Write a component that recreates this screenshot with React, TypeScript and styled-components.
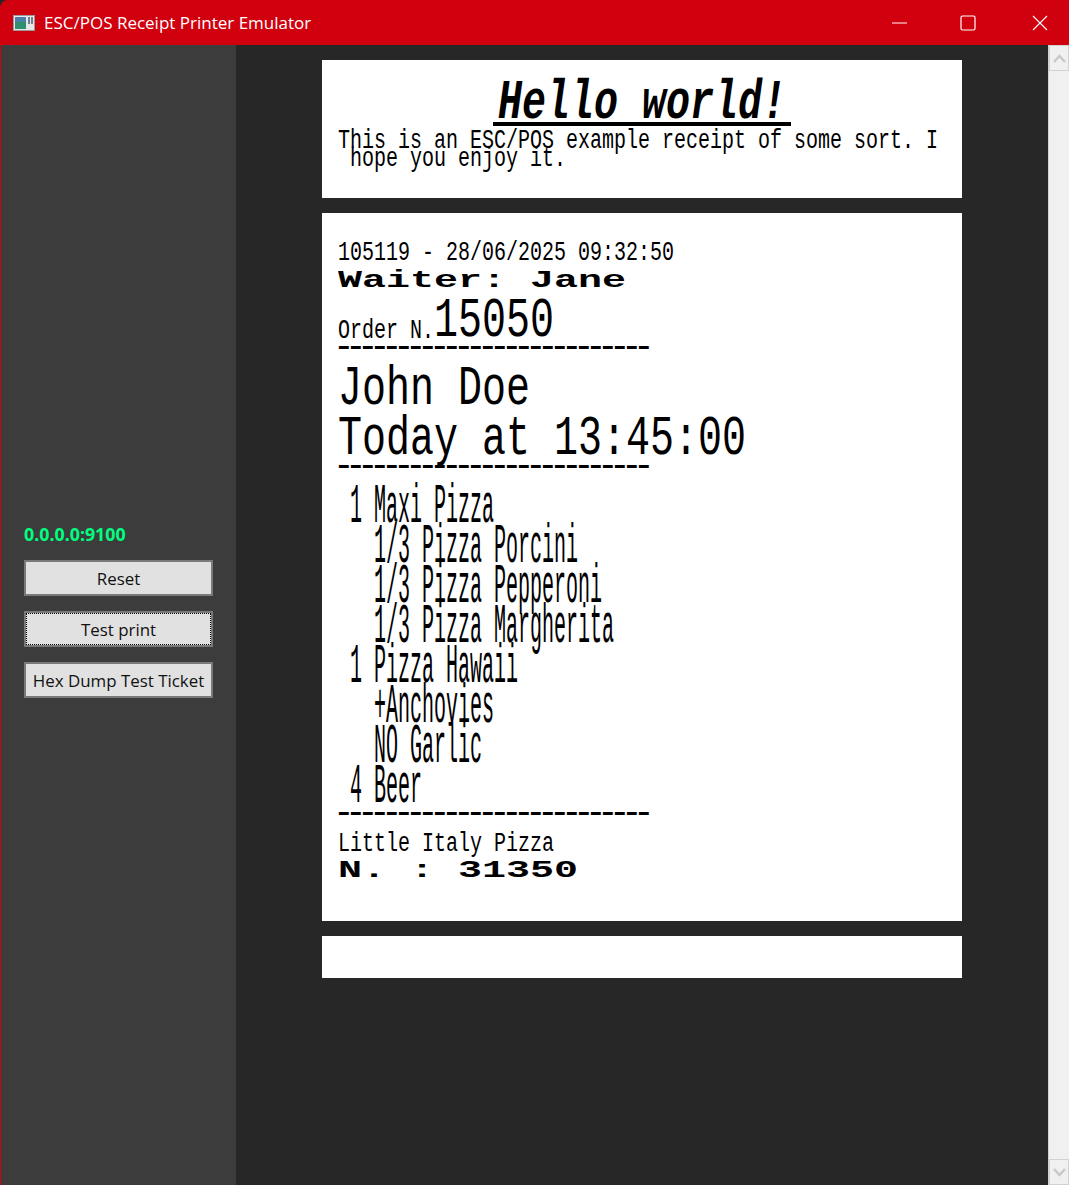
import React from 'react';
import styled, { createGlobalStyle } from 'styled-components';

const GlobalStyle = createGlobalStyle`
  html, body {
    margin: 0;
    padding: 0;
    height: 100%;
    background: #272727;
    overflow: hidden;
  }
  #root {
    height: 100%;
  }
`;

const Window = styled.div`
  display: flex;
  flex-direction: column;
  width: 1069px;
  height: 1185px;
  font-family: 'Open Sans', 'Noto Sans', sans-serif;
`;

const TitleBar = styled.header`
  display: flex;
  align-items: center;
  flex: 0 0 45px;
  padding: 0 21px 0 13px;
  box-sizing: border-box;
  background: #d1000e;
  border-top-left-radius: 8px;
  color: #fff;
`;

const AppIcon = styled.svg`
  flex: none;
  width: 22px;
  height: 16px;
  margin-right: 9px;
`;

const Title = styled.span`
  flex: 1;
  font-size: 17px;
  white-space: nowrap;
`;

const Control = styled.div<{ $gap: number }>`
  display: flex;
  align-items: center;
  justify-content: center;
  width: 16px;
  height: 45px;
  margin-left: ${({ $gap }) => $gap}px;
`;

const Body = styled.div`
  display: flex;
  flex: 1;
  min-height: 0;
`;

const Sidebar = styled.aside`
  display: flex;
  flex: 0 0 236px;
  flex-direction: column;
  justify-content: center;
  box-sizing: border-box;
  padding: 6px 23px 0;
  background: #3c3c3c;
  border-left: 1px solid #d1000e;
`;

const Address = styled.div`
  margin-bottom: 14px;
  color: #00ff7f;
  font-family: 'Open Sans', sans-serif;
  font-size: 17.8px;
  font-weight: 700;
  line-height: 23px;
`;

const ActionButton = styled.button<{ $focused?: boolean }>`
  height: 36px;
  margin-bottom: 15px;
  padding: 0;
  background: #e1e1e1;
  border: 2px solid #7a7a7a;
  color: #111;
  font-family: 'Open Sans', sans-serif;
  font-size: 16.9px;
  white-space: nowrap;
  outline: ${({ $focused }) => ($focused ? '1px dotted #000' : 'none')};
  outline-offset: -3px;
`;

const Main = styled.main`
  display: flex;
  flex: 1;
  flex-direction: column;
  align-items: center;
  gap: 15px;
  padding-top: 15px;
  background: #272727;
`;

const Receipt = styled.section<{ $height: number }>`
  box-sizing: border-box;
  flex: none;
  width: 640px;
  height: ${({ $height }) => $height}px;
  padding-left: 16px;
  background: #fff;
  color: #000;
  overflow: hidden;
`;

const Line = styled.div<{ $height: number; $top?: number; $center?: boolean }>`
  display: flex;
  align-items: baseline;
  justify-content: ${({ $center }) => ($center ? 'center' : 'flex-start')};
  height: ${({ $height }) => $height}px;
  margin-top: ${({ $top }) => $top ?? 0}px;
  padding-right: ${({ $center }) => ($center ? 16 : 0)}px;
  line-height: ${({ $height }) => $height}px;
`;

type PrintSize = 'normal' | 'tall' | 'big' | 'wide';

const printSizes: Record<PrintSize, { font: number; cell: number }> = {
  normal: { font: 27, cell: 12 },
  tall: { font: 56, cell: 12 },
  big: { font: 56, cell: 24 },
  wide: { font: 24, cell: 24 },
};

// Printer text is a fixed grid: the font is stretched to the cell width
const Print = styled.span<{
  $size: PrintSize;
  $chars: number;
  $bold?: boolean;
  $italic?: boolean;
  $drop?: number;
}>`
  display: block;
  flex: none;
  width: ${({ $size, $chars }) => printSizes[$size].cell * $chars}px;
  font-family: 'Liberation Mono', monospace;
  font-size: ${({ $size }) => printSizes[$size].font}px;
  font-style: ${({ $italic }) => ($italic ? 'italic' : 'normal')};
  font-weight: ${({ $bold }) => ($bold ? 700 : 400)};
  white-space: pre;
  transform-origin: left center;
  transform: translateY(${({ $drop }) => $drop ?? 0}px)
    scaleX(${({ $size }) => printSizes[$size].cell / (printSizes[$size].font * 0.6)});
`;

const Underline = styled.div`
  width: 298px;
  height: 4px;
  margin: -5px auto 0;
  position: relative;
  left: -8px;
  background: #000;
`;

const RuleText = styled.div<{ $top: number; $bottom: number }>`
  height: 4px;
  margin: ${({ $top, $bottom }) => `${$top}px 0 ${$bottom}px -5px`};
  font-family: 'Liberation Mono', monospace;
  font-size: 36px;
  letter-spacing: -9.6px;
  line-height: 4px;
  white-space: pre;
`;

const Scrollbar = styled.div`
  display: flex;
  flex: 0 0 21px;
  flex-direction: column;
  justify-content: space-between;
  background: #f0f0f0;
  border-left: 1px solid #d0d0d0;
  box-sizing: border-box;
`;

const ScrollButton = styled.div`
  display: flex;
  align-items: center;
  justify-content: center;
  height: 24px;
  background: #f0f0f0;
  border: 1px solid #d2d2d2;
`;

const Chevron = styled.svg`
  width: 13px;
  height: 9px;
  fill: none;
  stroke: #c8c8c8;
  stroke-width: 2.4;
`;

const P: React.FC<{
  size?: PrintSize;
  bold?: boolean;
  italic?: boolean;
  drop?: number;
  children: string;
}> = ({ size = 'normal', bold, italic, drop, children }) => (
  <Print $size={size} $chars={children.length} $bold={bold} $italic={italic} $drop={drop}>
    {children}
  </Print>
);

const RULE = '-'.repeat(26);

const items = [
  ' 1 Maxi Pizza',
  '   1/3 Pizza Porcini',
  '   1/3 Pizza Pepperoni',
  '   1/3 Pizza Margherita',
  ' 1 Pizza Hawaii',
  '   +Anchovies',
  '   NO Garlic',
  ' 4 Beer',
];

const App: React.FC = () => (
  <Window>
    <GlobalStyle />
    <TitleBar>
      <AppIcon viewBox="0 0 22 16">
        <rect x="0.5" y="0.5" width="21" height="15" fill="#e8e8e8" stroke="#9a9a9a" />
        <rect x="2" y="2" width="11" height="12" fill="#2f8f6f" />
        <rect x="2" y="2" width="11" height="5" fill="#4b7fa8" />
        <rect x="15" y="2" width="2" height="7" fill="#6f7f8f" />
        <rect x="18" y="2" width="2" height="7" fill="#6f7f8f" />
      </AppIcon>
      <Title>ESC/POS Receipt Printer Emulator</Title>
      <Control $gap={0}>
        <svg width="16" height="2" viewBox="0 0 16 2">
          <path d="M0 1h15" stroke="#fff" strokeWidth="1" fill="none" />
        </svg>
      </Control>
      <Control $gap={52}>
        <svg width="16" height="16" viewBox="0 0 16 16">
          <rect x="1" y="1" width="14" height="14" rx="1.5" stroke="#fff" strokeWidth="1.2" fill="none" />
        </svg>
      </Control>
      <Control $gap={56}>
        <svg width="16" height="16" viewBox="0 0 16 16">
          <path d="M1 1l14 14M15 1L1 15" stroke="#fff" strokeWidth="1.1" fill="none" />
        </svg>
      </Control>
    </TitleBar>
    <Body>
      <Sidebar>
        <Address>0.0.0.0:9100</Address>
        <ActionButton>Reset</ActionButton>
        <ActionButton $focused>Test print</ActionButton>
        <ActionButton>Hex Dump Test Ticket</ActionButton>
      </Sidebar>
      <Main>
        <Receipt $height={138}>
          <Line $height={48} $top={19} $center>
            <P size="big" bold italic>Hello world!</P>
          </Line>
          <Underline />
          <Line $height={18} $top={6}>
            <P>This is an ESC/POS example receipt of some sort. I</P>
          </Line>
          <Line $height={18}>
            <P> hope you enjoy it.</P>
          </Line>
        </Receipt>
        <Receipt $height={708}>
          <Line $height={28} $top={26}>
            <P>105119 - 28/06/2025 09:32:50</P>
          </Line>
          <Line $height={28}>
            <P size="wide" bold>Waiter: Jane</P>
          </Line>
          <Line $height={52}>
            <P drop={2}>Order N.</P>
            <P size="big">15050</P>
          </Line>
          <RuleText $top={-1} $bottom={14}>{RULE}</RuleText>
          <Line $height={50}>
            <P size="big">John Doe</P>
          </Line>
          <Line $height={50}>
            <P size="big">Today at 13:45:00</P>
          </Line>
          <RuleText $top={1} $bottom={18}>{RULE}</RuleText>
          {items.map(item => (
            <Line key={item} $height={40}>
              <P size="tall">{item}</P>
            </Line>
          ))}
          <RuleText $top={5} $bottom={15}>{RULE}</RuleText>
          <Line $height={26}>
            <P>Little Italy Pizza</P>
          </Line>
          <Line $height={27}>
            <P size="wide" bold>N. : 31350</P>
          </Line>
        </Receipt>
        <Receipt $height={42} />
      </Main>
      <Scrollbar>
        <ScrollButton>
          <Chevron viewBox="0 0 13 9">
            <path d="M1 8l5.5-6L12 8" />
          </Chevron>
        </ScrollButton>
        <ScrollButton>
          <Chevron viewBox="0 0 13 9">
            <path d="M1 1l5.5 6L12 1" />
          </Chevron>
        </ScrollButton>
      </Scrollbar>
    </Body>
  </Window>
);

export default App;
